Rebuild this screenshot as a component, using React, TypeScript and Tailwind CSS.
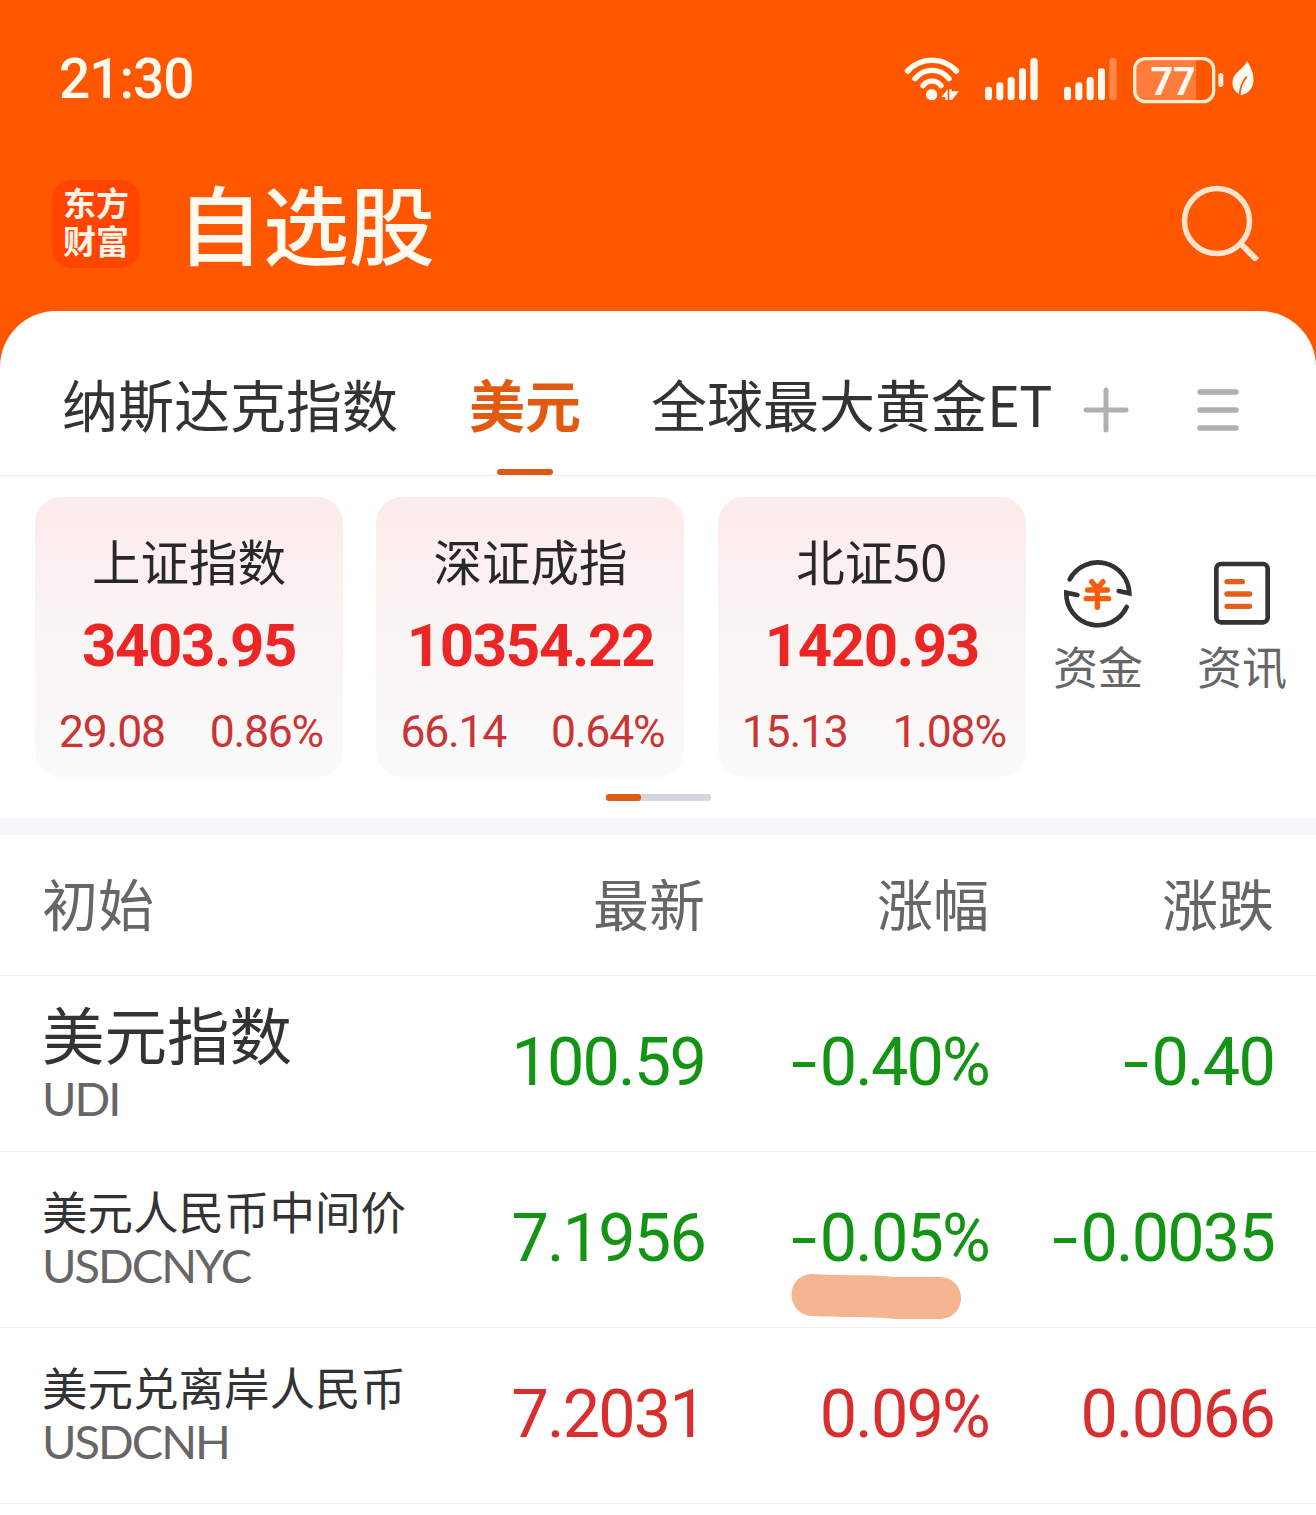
import React from "react";

const CJK = "font-['Noto_Sans_CJK_SC',sans-serif]";
const NUM = "font-['Roboto','Noto_Sans_CJK_SC',sans-serif]";

function WifiIcon() {
  return (
    <svg className="h-[50px] w-[60px]" viewBox="39 45 180 150" fill="none" stroke="#fffaf0" strokeLinecap="round">
      <path d="M53 93 C92 50 160 50 199 93" strokeWidth="17" />
      <path d="M75 116 C103 83 149 83 177 116" strokeWidth="16" />
      <path d="M99 137 C113 119 139 119 153 137" strokeWidth="16" />
      <circle cx="125" cy="164" r="17" fill="#fffaf0" stroke="none" />
      <path d="M173 148 V180 H166 V171 H154 Z M178 148 H185 V154 H207 L186 180 H178 Z" fill="#fffaf0" stroke="none" />
    </svg>
  );
}

function SignalIcon({ weak = false }: { weak?: boolean }) {
  return (
    <svg className="h-[50px] w-[56px]" viewBox="279 45 168 150" fill="#fffaf0">
      <rect x="285" y="140" width="21" height="41" rx="10" />
      <rect x="319" y="127" width="21" height="54" rx="10" />
      <rect x="353" y="111" width="21" height="70" rx="10" />
      <rect x="387" y="85" width="21" height="96" rx="10" />
      <rect x="421" y="54" width="22" height="127" rx="10" opacity={weak ? 0.3 : 1} />
    </svg>
  );
}

function BatteryIcon() {
  return (
    <svg className="h-[50px] w-[92px]" viewBox="726 45 276 150">
      <path d="M762 59 H918 V181 H762 Q738 181 738 157 V83 Q738 59 762 59 Z" fill="#ff7c3c" />
      <rect x="734" y="56" width="237" height="129" rx="32" fill="none" stroke="#ffecd0" strokeWidth="10" />
      <rect x="985" y="99" width="15" height="42" rx="7" fill="#ffecd0" />
      <text x="849" y="164" textAnchor="middle" fontSize="118" fontWeight="700" fill="#fffaf0" className="font-['Roboto']">
        77
      </text>
    </svg>
  );
}

function LeafIcon() {
  return (
    <svg className="h-[50px] w-[25px]" viewBox="1020 45 75 150">
      <path d="M1072 64 C1086 88 1093 108 1090 128 C1086 150 1072 160 1054 166 C1034 156 1025 142 1028 122 C1032 98 1058 88 1072 64 Z" fill="#fffaf0" />
      <path d="M1070 110 C1056 126 1049 144 1049 170" fill="none" stroke="#ff5600" strokeWidth="5" />
    </svg>
  );
}

function SearchIcon() {
  return (
    <svg className="h-[80px] w-[80px]" viewBox="0 0 80 80" fill="none" stroke="#ffe3cd">
      <circle cx="37" cy="40" r="32.5" strokeWidth="5.5" />
      <path d="M60 62 L77 79" strokeWidth="6" />
    </svg>
  );
}

function FundsIcon() {
  return (
    <svg className="h-[72px] w-[72px]" viewBox="95 82 216 216" fill="none" strokeLinecap="round">
      <g stroke="#333" strokeWidth="14">
        <path d="M118 149 A95 95 0 0 1 297 191 L265 184" />
        <path d="M289 232 A95 95 0 0 1 108 189 L141 196" />
      </g>
      <g stroke="#fa5b0f" strokeWidth="16">
        <path d="M184 156 L201 176 L218 156" />
        <path d="M172 181 H231 M168 207 H235 M201 178 V233" />
      </g>
    </svg>
  );
}

function NewsIcon() {
  return (
    <svg className="h-[72px] w-[72px]" viewBox="527 82 216 216" fill="none" strokeLinecap="round">
      <rect x="558" y="103" width="154" height="175" rx="14" stroke="#333" strokeWidth="14" />
      <path d="M590 156 H636 M590 193 H658 M590 230 H658" stroke="#e5601c" strokeWidth="16" />
    </svg>
  );
}

const indices = [
  { name: "上证指数", value: "3403.95", diff: "29.08", pct: "0.86%" },
  { name: "深证成指", value: "10354.22", diff: "66.14", pct: "0.64%" },
  { name: "北证50", value: "1420.93", diff: "15.13", pct: "1.08%" },
];

const quotes = [
  { name: "美元指数", code: "UDI", last: "100.59", pct: "-0.40%", diff: "-0.40", large: true, up: false, marked: false },
  { name: "美元人民币中间价", code: "USDCNYC", last: "7.1956", pct: "-0.05%", diff: "-0.0035", large: false, up: false, marked: true },
  { name: "美元兑离岸人民币", code: "USDCNH", last: "7.2031", pct: "0.09%", diff: "0.0066", large: false, up: true, marked: false },
];

function Figure({ text }: { text: string }) {
  const negative = text.startsWith("-");
  return (
    <span className="inline-flex">
      {negative && <span className="mr-[5px] inline-block origin-right scale-x-[1.4]">-</span>}
      {negative ? text.slice(1) : text}
    </span>
  );
}

export default function App() {
  return (
    <div className={`h-[1515px] w-[1316px] overflow-hidden bg-[#ff5600] ${CJK}`}>
      <header className="h-[311px]">
        <div className="flex h-[154px] items-center pt-[5px] pr-[61px] pl-[59px]">
          <span className={`mr-auto text-[55px] leading-none font-medium tracking-[-1px] text-[#fffaf0] ${NUM}`}>21:30</span>
          <WifiIcon />
          <div className="ml-5 flex"><SignalIcon /></div>
          <div className="ml-[23px] flex"><SignalIcon weak /></div>
          <div className="ml-[14px] flex"><BatteryIcon /></div>
          <div className="ml-1.5 flex"><LeafIcon /></div>
        </div>
        <div className="flex h-[140px] items-center pr-[56px] pl-[52px]">
          <div className="flex h-[88px] w-[88px] flex-col items-center justify-center rounded-[20px] bg-[#ff4500] font-['Liberation_Sans','Noto_Sans_CJK_SC'] text-[33px] leading-[38px] font-bold text-[#fff3ea]">
            <span>东方</span>
            <span>财富</span>
          </div>
          <h1 className="mb-[5px] ml-[37px] text-[86px] leading-[100px] font-medium text-[#fffaf0]">自选股</h1>
          <div className="mb-[7px] ml-auto"><SearchIcon /></div>
        </div>
      </header>

      <main className="h-[1204px] rounded-t-[56px] bg-white">
        <nav className="flex h-[165px] border-b border-[#ececec] text-[56px] leading-[80px] text-[#333]">
          <span className="mt-[52px] ml-[62px] w-[336px]">纳斯达克指数</span>
          <div className="ml-[71px] flex w-[112px] flex-col items-center justify-between">
            <span className="mt-[52px] font-bold text-[#e05a10]">美元</span>
            <span className="h-[6px] w-[56px] rounded-[3px] bg-[#d95a16]" />
          </div>
          <span className="mt-[52px] ml-[70px] w-[402px] overflow-hidden whitespace-nowrap">
            全球最大黄金<span className="tracking-[-1px]">ET</span>
          </span>
          <svg className="mt-[75px] ml-[29px] h-[48px] w-[48px]" viewBox="0 0 48 48" stroke="#b0b0b0" strokeWidth="5" strokeLinecap="round">
            <path d="M4 24 H44 M24 4 V44" />
          </svg>
          <svg className="mt-[75px] ml-[64px] h-[48px] w-[48px]" viewBox="0 0 48 48" stroke="#b0b0b0" strokeWidth="5.5" strokeLinecap="round">
            <path d="M6 6 H42 M6 24 H42 M6 42 H42" />
          </svg>
        </nav>

        <section className="flex h-[301px] pt-[21px] pl-[35px]">
          <div className="flex gap-[33.4px]">
            {indices.map((i) => (
              <div key={i.name} className="flex h-[280px] w-[308px] flex-col items-center rounded-[26px] bg-gradient-to-b from-[#fdebeb] via-[#f9f5f4] to-[#fafafa]">
                <span className="mt-[28px] text-[48.5px] leading-[70px] text-[#282828]">{i.name}</span>
                <span className={`mt-[21px] text-[60px] leading-[60px] font-bold tracking-[-1.4px] text-[#ec2525] ${NUM}`}>{i.value}</span>
                <div className={`mt-[31px] flex w-full justify-between pr-[20px] pl-[24px] text-[44.5px] leading-[50px] tracking-[-1.2px] text-[#cb3435] ${NUM}`}>
                  <span>{i.diff}</span>
                  <span>{i.pct}</span>
                </div>
              </div>
            ))}
          </div>
          <div className="mt-[60px] ml-[27.2px] flex gap-[54px] text-[45px] leading-[60px] text-[#666]">
            <div className="flex w-[90px] flex-col items-center"><FundsIcon /><span className="mt-[7px]">资金</span></div>
            <div className="flex w-[90px] flex-col items-center"><NewsIcon /><span className="mt-[7px]">资讯</span></div>
          </div>
        </section>
        <div className="flex h-[41px] justify-center pt-[17px]">
          <div className="h-[7px] w-[105px] rounded-[3px] bg-[#d5d7dc]">
            <div className="h-full w-[35px] rounded-[3px] bg-[#dc5d18]" />
          </div>
        </div>
        <div className="h-[17px] bg-[#f6f7f9]" />

        <section>
          <div className="grid h-[141px] grid-cols-[375px_288px_284px_285px] border-b border-[#ececec] pl-[42px] text-[56px] leading-[80px] text-[#666]">
            <span className="mt-[27px]">初始</span>
            <span className="mt-[27px] text-right">最新</span>
            <span className="mt-[27px] text-right">涨幅</span>
            <span className="mt-[27px] text-right">涨跌</span>
          </div>
          {quotes.map((q) => (
            <div key={q.code} className={`relative grid h-[176px] grid-cols-[375px_288px_284px_285px] border-b border-[#ececec] pl-[42px] ${q.up ? "text-[#d92e2e]" : "text-[#149414]"}`}>
              <div className="flex flex-col font-['Liberation_Sans','Noto_Sans_CJK_SC'] whitespace-nowrap">
                <span className={q.large ? "mt-[22px] text-[62.5px] leading-[80px] text-[#333]" : "mt-[33px] text-[45.5px] leading-[60px] text-[#333]"}>{q.name}</span>
                <span className={`${q.large ? "-mt-[5px]" : "-mt-[5px]"} font-['Lato'] text-[47px] leading-[50px] tracking-[-2px] text-[#666]`}>{q.code}</span>
              </div>
              {[q.last, q.pct, q.diff].map((t) => (
                <span key={t} className={`pt-[46px] text-right text-[66.5px] leading-[80px] tracking-[-1.8px] ${NUM}`}><Figure text={t} /></span>
              ))}
              {q.marked && (
                <svg className="absolute top-[121px] left-[790px] h-[48px] w-[173px]" viewBox="0 0 173 48">
                  <path d="M21 1 C50 3 75 1 105 4 H150 C178 5 178 45 150 46 H105 C75 43 50 45 21 43 C-5 40 -5 3 21 1 Z" fill="#f5b591" />
                </svg>
              )}
            </div>
          ))}
        </section>
      </main>
    </div>
  );
}
